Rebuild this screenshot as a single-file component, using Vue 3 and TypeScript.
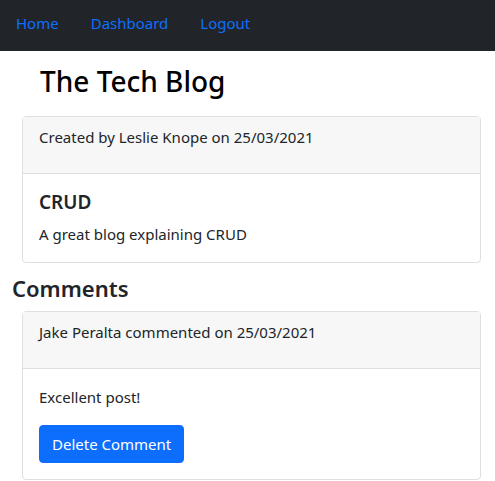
<script setup lang="ts">
interface NavLink {
  label: string
  href: string
}

const links: NavLink[] = [
  { label: 'Home', href: '#home' },
  { label: 'Dashboard', href: '#dashboard' },
  { label: 'Logout', href: '#logout' },
]

const post = {
  author: 'Leslie Knope',
  date: '25/03/2021',
  title: 'CRUD',
  body: 'A great blog explaining CRUD',
}

const comments = [
  { id: 1, author: 'Jake Peralta', date: '25/03/2021', text: 'Excellent post!' },
]
</script>

<template>
  <div class="page">
    <nav class="navbar">
      <a v-for="link in links" :key="link.label" :href="link.href" class="nav-link">{{ link.label }}</a>
    </nav>
    <header class="site-header">
      <h1>The Tech Blog</h1>
    </header>
    <main>
      <article class="card">
        <div class="card-header">
          <p>Created by {{ post.author }} on {{ post.date }}</p>
        </div>
        <div class="card-body">
          <h2>{{ post.title }}</h2>
          <p>{{ post.body }}</p>
        </div>
      </article>
      <section>
        <h3>Comments</h3>
        <article v-for="comment in comments" :key="comment.id" class="card">
          <div class="card-header">
            <p>{{ comment.author }} commented on {{ comment.date }}</p>
          </div>
          <div class="card-body">
            <p class="comment-text">{{ comment.text }}</p>
            <button type="button" class="btn">Delete Comment</button>
          </div>
        </article>
      </section>
    </main>
  </div>
</template>

<style>
body {
  background: #fff;
}
</style>

<style scoped>
.page {
  color: #212529;
  font-family: "Segoe UI", "Noto Sans", "Open Sans", sans-serif;
  font-size: 15px;
  line-height: 24px;
}

h1,
h2,
h3,
p {
  margin: 0;
}

.navbar {
  display: flex;
  gap: 32px;
  padding: 11px 16px 16px;
  background: #212529;
}

.nav-link {
  color: #0d6efd;
  text-decoration: none;
}

.site-header {
  padding: 12px 40px 17px;
  color: #000;
}

h1 {
  font-size: 28px;
  font-weight: 500;
  line-height: 36px;
}

main {
  padding: 0 14px 0 12px;
}

.card {
  margin-left: 10px;
  border: 1px solid #dfdfdf;
  border-radius: 4px;
}

.card-header {
  padding: 8px 16px 24px;
  border-bottom: 1px solid #dfdfdf;
  background: #f7f7f7;
}

.card-body {
  padding: 16px;
}

h2,
h3 {
  font-weight: 600;
  line-height: 24px;
}

h2 {
  margin-bottom: 8px;
  font-size: 19px;
}

h3 {
  margin: 13px 0 11px;
  font-size: 22px;
}

.comment-text {
  margin-bottom: 16px;
}

.btn {
  display: block;
  padding: 6px 12px;
  border: 1px solid #0d6efd;
  border-radius: 4px;
  background: #0d6efd;
  color: #fff;
  font: inherit;
  cursor: pointer;
}
</style>
